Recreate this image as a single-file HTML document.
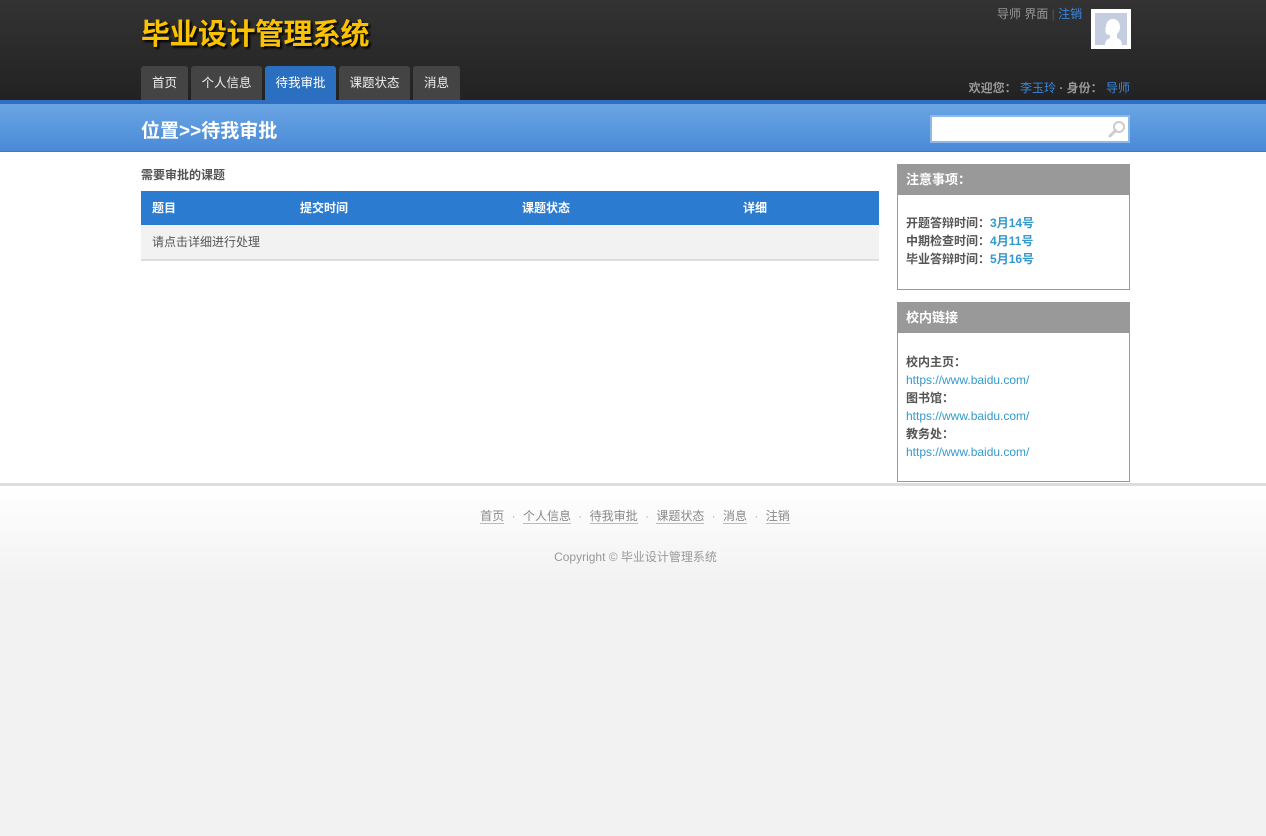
<!DOCTYPE html>
<html><head><meta charset="utf-8"><style>
*{margin:0;padding:0;box-sizing:border-box}
body{width:1266px;height:836px;background:#f2f2f2;font-family:"Liberation Sans","Noto Sans CJK SC",sans-serif;font-size:12px;color:#555;position:relative;overflow:hidden}
.a{position:absolute}
#hd{left:0;top:0;width:1266px;height:100px;background:linear-gradient(#333,#222)}
.title{left:141px;top:11px;font-size:29px;font-weight:bold;color:#fbc200;text-shadow:2px 2px 2px #000;letter-spacing:-0.5px}
.tab{top:66px;height:34px;background:#444;color:#eee;font-size:12.5px;line-height:34px;text-align:center;border-radius:3px 3px 0 0}
#bar{left:0;top:100px;width:1266px;height:52px;background:linear-gradient(#6aa5e3,#4a8ad7);border-top:4px solid #2e6fc4;border-bottom:1px solid #3a7ac9}
#main{left:0;top:152px;width:1266px;height:331px;background:#fff}
#ft{left:0;top:483px;width:1266px;height:100px;border-top:3px solid #ddd;background:linear-gradient(#fff,#f2f2f2)}
.box{left:897px;width:233px;border:1px solid #999;background:#fff}
.box h3{background:#999;color:#fff;font-size:13px;height:30px;line-height:30px;padding-left:8px}
.b{color:#3399cc}
.fl a{color:#888;text-decoration:none;border-bottom:1px solid #bbb}
</style></head><body>
<div id="hd" class="a"></div>
<div class="a title">毕业设计管理系统</div>
<div class="a tab" style="left:141px;width:47px">首页</div>
<div class="a tab" style="left:191px;width:71px">个人信息</div>
<div class="a tab" style="left:265px;width:71px;background:#2b6fc0;color:#fff">待我审批</div>
<div class="a tab" style="left:339px;width:71px">课题状态</div>
<div class="a tab" style="left:413px;width:47px">消息</div>
<div class="a" style="left:997px;top:5px;color:#999;font-size:12px">导师 界面 <span style="color:#555">|</span> <span style="color:#3a86e0">注销</span></div>
<div class="a" style="left:1091px;top:9px;width:40px;height:40px;background:#fff;padding:4px">
<svg width="32" height="32" viewBox="0 0 32 32"><rect width="32" height="32" fill="#c5cde0"/><path d="M10 32c0-4 2-6 5-7v-3c-2 0-4-1-4-2l-1-2 1-1c-1-1-1-2 0-3 0-5 3-8 7-8s7 3 7 8c0 3-1 5-3 7v4c2 1 5 2 5 7z" fill="#fff"/></svg></div>
<div class="a" style="right:136px;top:79px;color:#999;font-weight:bold">欢迎您：&nbsp;<span style="color:#3a86e0;font-weight:normal">李玉玲</span> · 身份：&nbsp;<span style="color:#3a86e0;font-weight:normal">导师</span></div>
<div id="bar" class="a"></div>
<div class="a" style="left:141px;top:116px;font-size:19px;font-weight:bold;color:#fff">位置&gt;&gt;待我审批</div>
<div class="a" style="left:930px;top:115px;width:200px;height:28px;background:#fff;border:2px solid #8db8ea">
<svg class="a" style="left:176px;top:3px" width="18" height="18" viewBox="0 0 18 18"><circle cx="11" cy="7" r="5" fill="none" stroke="#ccc" stroke-width="2"/><path d="M7.5 10.5L2 16" stroke="#ccc" stroke-width="3" stroke-linecap="round"/></svg></div>
<div id="main" class="a"></div>
<div class="a" style="left:141px;top:166px;font-weight:bold">需要审批的课题</div>
<div class="a" style="left:141px;top:191px;width:738px;height:34px;background:#2b7bd1;color:#fff;font-weight:bold;line-height:34px">
<span class="a" style="left:11px">题目</span><span class="a" style="left:159px">提交时间</span><span class="a" style="left:381px">课题状态</span><span class="a" style="left:602px">详细</span></div>
<div class="a" style="left:141px;top:225px;width:738px;height:36px;background:#f2f2f2;border-bottom:2px solid #ddd;line-height:34px;padding-left:11px">请点击详细进行处理</div>
<div class="a box" style="top:164px;height:126px"><h3>注意事项：</h3>
<div style="padding:19px 8px;line-height:18px;font-weight:bold">开题答辩时间：<span class="b">3月14号</span><br>中期检查时间：<span class="b">4月11号</span><br>毕业答辩时间：<span class="b">5月16号</span></div></div>
<div class="a box" style="top:302px;height:180px"><h3>校内链接</h3>
<div style="padding:20px 8px;line-height:18px"><b>校内主页：</b><br><span class="b">https://www.baidu.com/</span><br><b>图书馆：</b><br><span class="b">https://www.baidu.com/</span><br><b>教务处：</b><br><span class="b">https://www.baidu.com/</span></div></div>
<div id="ft" class="a"></div>
<div class="a fl" style="left:0;width:1270px;top:507px;text-align:center;color:#aaa;word-spacing:4px"><a>首页</a> · <a>个人信息</a> · <a>待我审批</a> · <a>课题状态</a> · <a>消息</a> · <a>注销</a></div>
<div class="a" style="left:0;width:1271px;top:548px;text-align:center;color:#999">Copyright © 毕业设计管理系统</div>
</body></html>
